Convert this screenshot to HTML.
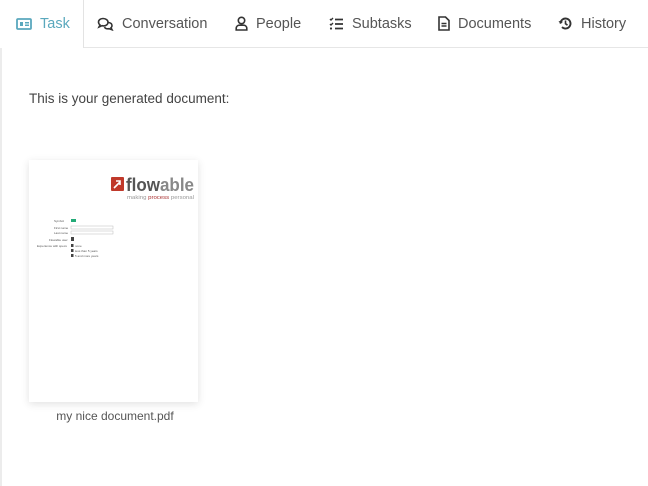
<!DOCTYPE html>
<html><head><meta charset="utf-8"><style>
*{margin:0;padding:0;box-sizing:border-box}
body{width:648px;height:486px;background:#fff;font-family:"Liberation Sans",sans-serif;position:relative;overflow:hidden}
.leftb{position:absolute;left:0;top:0;width:2px;height:486px;background:#ececec}
.tabs{position:absolute;top:0;left:0;width:648px;height:48px;background:#fff}
.tabs .line{position:absolute;left:83px;right:0;top:47px;height:1px;background:#e6e6e6}
.tab{position:absolute;top:0;height:47px;display:flex;align-items:center;font-size:14.5px;color:#555}
.tab svg{margin-right:8px}
.active{left:2px;width:82px;border-right:1px solid #e3e3e3;color:#5aa8bd;padding-left:14px;height:48px;background:#fff}
.intro{position:absolute;left:29px;top:91px;font-size:13.5px;color:#444}
.card{position:absolute;left:29px;top:160px;width:169px;height:242px;background:#fff;box-shadow:0 2px 8px rgba(0,0,0,.12)}
.cap{position:absolute;left:29px;width:172px;top:409px;text-align:center;font-size:12px;color:#555}
</style></head><body>
<div class="leftb"></div>
<div class="tabs">
<div class="line"></div>
<div class="tab active"><svg width="16" height="12" viewBox="0 0 16 12"><rect x="1" y="1" width="14" height="10" rx="1" fill="none" stroke="#5aa8bd" stroke-width="1.8"/><rect x="4" y="4" width="3" height="4" fill="#5aa8bd"/><rect x="9" y="4" width="4" height="1.5" fill="#5aa8bd"/><rect x="9" y="6.5" width="4" height="1.5" fill="#5aa8bd"/></svg>Task</div>
<div class="tab" style="left:97px"><svg width="17" height="14" viewBox="0 0 17 14"><path d="M6 1.5C3 1.5 1.5 3.3 1.5 5s.7 2.3 1.5 3L2 10l3-1.3c.5.1 1 .2 1.5.2 3 0 4.5-1.8 4.5-3.7S9 1.5 6 1.5z" fill="none" stroke="#333" stroke-width="1.6"/><path d="M11.5 5.5c2.2.3 3.5 1.6 3.5 3.2 0 .9-.4 1.5-1 2l1 2-2.8-1c-.4.1-.8.1-1.2.1-1.8 0-3-.6-3.6-1.7" fill="none" stroke="#333" stroke-width="1.6"/></svg>Conversation</div>
<div class="tab" style="left:235px"><svg width="13" height="15" viewBox="0 0 13 15"><circle cx="6.5" cy="4.5" r="3.2" fill="none" stroke="#333" stroke-width="1.6"/><path d="M1.2 14v-1.5c0-2 1.5-3.3 3.3-3.3h4c1.8 0 3.3 1.3 3.3 3.3V14z" fill="none" stroke="#333" stroke-width="1.6"/></svg>People</div>
<div class="tab" style="left:329px"><svg width="15" height="13" viewBox="0 0 15 13"><path d="M1 2l1 1 2-2M1 7l1 1 2-2" fill="none" stroke="#333" stroke-width="1.4"/><circle cx="2" cy="11.5" r="1.1" fill="#333"/><path d="M6 2.5h8M6 7h8M6 11.5h8" stroke="#333" stroke-width="1.7"/></svg>Subtasks</div>
<div class="tab" style="left:438px"><svg width="12" height="15" viewBox="0 0 12 15"><path d="M1 1h6.5L11 4.5V14H1z" fill="none" stroke="#333" stroke-width="1.6"/><path d="M3.5 7.5h5M3.5 10h5" stroke="#333" stroke-width="1.4"/></svg>Documents</div>
<div class="tab" style="left:558px"><svg width="15" height="15" viewBox="0 0 15 15"><path d="M2.5 7.5a5 5 0 1 1 1.5 3.6" fill="none" stroke="#333" stroke-width="1.9"/><path d="M0.5 5l2 3 2.6-2.3z" fill="#333"/><path d="M7.5 4.5v3.2l2 1.5" fill="none" stroke="#333" stroke-width="1.6"/></svg>History</div>
</div>
<div class="intro">This is your generated document:</div>
<div class="card">
<svg width="169" height="242" viewBox="0 0 169 242">
<rect x="82" y="17" width="13" height="14" rx="1" fill="#c0392b"/>
<path d="M85 28l6-6M87 21h4v4" stroke="#fff" stroke-width="1.6" fill="none"/>
<text x="97" y="31" font-family="Liberation Sans" font-weight="bold" font-size="18" fill="#555" textLength="68" lengthAdjust="spacingAndGlyphs">flow<tspan fill="#888">able</tspan></text>
<text x="98" y="39" font-family="Liberation Sans" font-size="5.5" fill="#999" textLength="67" lengthAdjust="spacingAndGlyphs">making <tspan fill="#a33">process</tspan> personal</text>
<g font-family="Liberation Sans" font-size="3" fill="#555">
<text x="25" y="62">Symbol</text><rect x="42" y="59" width="5" height="3" fill="#2a7"/>
<text x="25" y="69">First name</text><rect x="42" y="66" width="42" height="3" fill="none" stroke="#bbb" stroke-width=".5"/>
<text x="25" y="74">Last name</text><rect x="42" y="71" width="42" height="3" fill="none" stroke="#bbb" stroke-width=".5"/>
<text x="20" y="81">Flowable user</text><rect x="42" y="77" width="3" height="4" fill="#444"/>
<text x="8" y="87">Experience with specs</text>
<rect x="42" y="84" width="2.5" height="3" fill="#444"/><text x="46" y="87">none</text>
<rect x="42" y="89" width="2.5" height="3" fill="#444"/><text x="46" y="92">less than 5 years</text>
<rect x="42" y="94" width="2.5" height="3" fill="#444"/><text x="46" y="97">5 and more years</text>
</g>
</svg>
</div>
<div class="cap">my nice document.pdf</div>
</body></html>
